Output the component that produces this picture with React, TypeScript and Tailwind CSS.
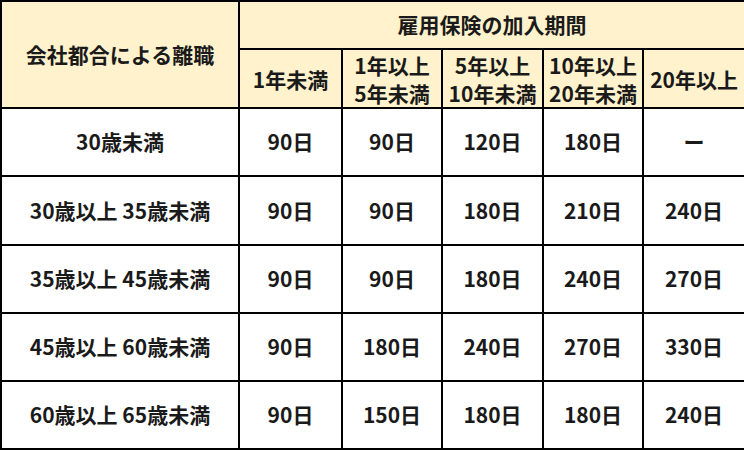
const subHeads: string[][] = [
  ["1年未満"],
  ["1年以上", "5年未満"],
  ["5年以上", "10年未満"],
  ["10年以上", "20年未満"],
  ["20年以上"],
];

const rows: { label: string; days: string[]; h: string }[] = [
  { label: "30歳未満", days: ["90日", "90日", "120日", "180日", "ー"], h: "h-[68px]" },
  { label: "30歳以上 35歳未満", days: ["90日", "90日", "180日", "210日", "240日"], h: "h-[69px]" },
  { label: "35歳以上 45歳未満", days: ["90日", "90日", "180日", "240日", "270日"], h: "h-[68px]" },
  { label: "45歳以上 60歳未満", days: ["90日", "180日", "240日", "270日", "330日"], h: "h-[68px]" },
  { label: "60歳以上 65歳未満", days: ["90日", "150日", "180日", "180日", "240日"], h: "h-[68px]" },
];

export default function App() {
  return (
    <div className="w-[744px] h-[450px] bg-white font-['Noto_Sans_CJK_JP','Noto_Sans',sans-serif] text-[#1a1a1a]">
      <table className="w-[744px] table-fixed border-collapse text-[21px] font-bold text-center">
        <colgroup>
          <col className="w-[238px]" />
          <col className="w-[103px]" />
          <col className="w-[100px]" />
          <col className="w-[101px]" />
          <col className="w-[100px]" />
          <col className="w-[102px]" />
        </colgroup>
        <thead className="bg-[#fff2cc]">
          <tr className="h-[48px]">
            <th rowSpan={2} className="border-2 border-black font-bold p-0">
              会社都合による離職
            </th>
            <th colSpan={5} className="border-2 border-black font-bold p-0">
              雇用保険の加入期間
            </th>
          </tr>
          <tr className="h-[59px]">
            {subHeads.map((lines, i) => (
              <th key={i} className="border-2 border-black font-bold leading-[28px] p-0">
                {lines.map((l) => (
                  <div key={l}>{l}</div>
                ))}
              </th>
            ))}
          </tr>
        </thead>
        <tbody>
          {rows.map((r) => (
            <tr key={r.label} className={r.h}>
              <td className="border-2 border-black p-0">{r.label}</td>
              {r.days.map((d, i) => (
                <td key={i} className="border-2 border-black p-0">
                  {d}
                </td>
              ))}
            </tr>
          ))}
        </tbody>
      </table>
    </div>
  );
}
